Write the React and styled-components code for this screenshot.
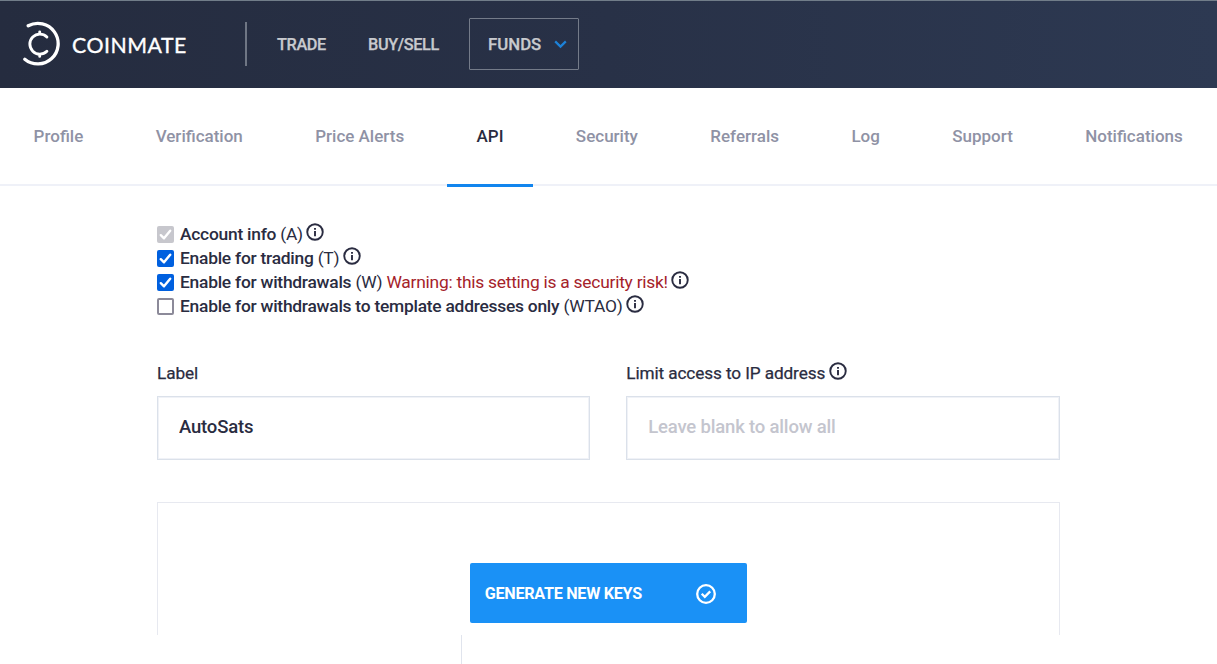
import React from 'react';
import styled, { createGlobalStyle } from 'styled-components';

const GlobalStyle = createGlobalStyle`
  *, *::before, *::after { box-sizing: border-box; }
  html, body { margin: 0; background: #fff; }
  body {
    font-family: Roboto, "Liberation Sans", sans-serif;
    color: #2a2c41;
    overflow: hidden;
  }
`;

const Page = styled.div`
  width: 1217px;
  height: 664px;
  overflow: hidden;
  background: #fff;
`;

const Header = styled.header`
  display: flex;
  align-items: center;
  height: 88px;
  padding: 0 0 1px 22px;
  border-top: 1px solid #717d89;
  background: linear-gradient(90deg, #252c3f 0%, #283147 50%, #2d3952 100%);
`;

const Brand = styled.div`
  display: flex;
  align-items: center;
  width: 223px;
  height: 46px;
  color: #fff;
`;

const BrandName = styled.span`
  margin: 2px 0 0 11px;
  font-family: Lato, sans-serif;
  font-size: 21.3px;
  line-height: 26px;
  letter-spacing: 0.5px;
  -webkit-text-stroke: 0.35px #fff;
`;

const Divider = styled.div`
  width: 2px;
  height: 44px;
  background: #6f7684;
`;

const MainNav = styled.nav`
  display: flex;
  align-items: center;
`;

const NavLink = styled.a`
  margin-left: ${(p) => p.$gap}px;
  padding-top: 2px;
  width: ${(p) => p.$width}px;
  color: #c8cace;
  font-size: 16.3px;
  font-weight: 500;
  line-height: 20px;
  letter-spacing: -0.38px;
  white-space: nowrap;
  -webkit-text-stroke: 0.25px #c8cace;
`;

const FundsButton = styled.button`
  display: flex;
  align-items: center;
  justify-content: space-between;
  width: 110px;
  height: 52px;
  margin-left: 30px;
  padding: 0 11px 0 18px;
  border: 1px solid #747b89;
  border-radius: 1px;
  background: transparent;
  color: #c8cace;
  font-family: inherit;
  font-size: 16.8px;
  font-weight: 500;
  -webkit-text-stroke: 0.25px #c8cace;
`;

const Tabs = styled.nav`
  display: flex;
  gap: 12.4px;
  height: 98px;
  padding-left: 3.6px;
  background: linear-gradient(#eff1f8, #eff1f8) 0 96px / 100% 2px no-repeat;
`;

const Tab = styled.a`
  height: 99px;
  padding: 38px 30px 0;
  border-bottom: 3px solid ${(p) => (p.$active ? '#1285ee' : 'transparent')};
  color: ${(p) => (p.$active ? '#2a2c41' : '#8f92a5')};
  font-size: 17px;
  font-weight: 500;
  line-height: 20px;
  white-space: nowrap;
`;

const Content = styled.main`
  width: 902.5px;
  margin: 36px 0 0 157px;
`;

const Option = styled.label`
  display: flex;
  align-items: center;
  height: 24.1px;
  font-size: 17.4px;
  line-height: 24px;
  letter-spacing: -0.245px;
  white-space: nowrap;
`;

const CheckBox = styled.span`
  display: flex;
  flex: none;
  width: 17px;
  height: 17px;
  margin-right: 6px;
  border-radius: 2px;
  border: ${(p) => (p.$tone === 'empty' ? '2px solid #8c8a99' : '0')};
  background: ${(p) => ({ empty: '#fff', muted: '#c7c7cd', checked: '#0060df' })[p.$tone]};
`;

const OptionName = styled.span`
  font-weight: 500;
`;

const Warning = styled.span`
  color: #a5222a;
`;

const InfoMark = styled.svg`
  flex: none;
  width: 18px;
  height: 18px;
  margin: -5px 0 0 3.5px;
`;

const Fields = styled.div`
  display: flex;
  gap: 36px;
  margin-top: 42px;
`;

const Field = styled.div`
  width: 433.25px;
`;

const FieldLabel = styled.label`
  display: flex;
  align-items: center;
  height: 26px;
  margin-bottom: 10px;
  font-size: 17.2px;
  letter-spacing: -0.1px;
  white-space: nowrap;
  -webkit-text-stroke: 0.25px #2a2c41;
`;

const TextInput = styled.input`
  display: block;
  width: 100%;
  height: 64px;
  padding: 0 21px 2px;
  border: 1px solid #dbe1ea;
  box-shadow: inset 0 0 0 1px #f0f2f7;
  border-radius: 0;
  outline: 0;
  color: #2a2c41;
  font-family: inherit;
  font-size: 18.5px;
  font-weight: 500;
  letter-spacing: -0.18px;
  &::placeholder { color: #c4c5ce; opacity: 1; }
`;

const KeysPanel = styled.section`
  display: flex;
  justify-content: center;
  height: 133px;
  margin-top: 42px;
  padding-top: 60px;
  border: 1px solid #e7e9f0;
  border-bottom: 0;
`;

const GenerateButton = styled.button`
  display: flex;
  align-items: center;
  justify-content: space-between;
  width: 277px;
  height: 60px;
  padding: 1px 30px 0 15px;
  border: 0;
  border-radius: 2px;
  background: #1a91f6;
  color: #fff;
  font-family: inherit;
  font-size: 16.2px;
  font-weight: 700;
  letter-spacing: -0.29px;
  white-space: nowrap;
`;

const LowerRule = styled.div`
  height: 30px;
  margin-left: 304px;
  border-left: 1px solid #e0e4ed;
`;

const Info = () => (
  <InfoMark viewBox="0 0 18 18" fill="none">
    <circle cx="9" cy="9" r="7.75" stroke="#2a2c41" strokeWidth="1.9" />
    <path d="M9 8v5.2M9 4.9v1.8" stroke="#2a2c41" strokeWidth="1.9" />
  </InfoMark>
);

const Check = ({ tone }) => (
  <CheckBox $tone={tone}>
    {tone !== 'empty' && (
      <svg width="17" height="17" viewBox="0 0 17 17" fill="none">
        <path d="M3.8 9.2 7 12.3l6.2-7.6" stroke="#fff" strokeWidth="2.4" strokeLinecap="round" strokeLinejoin="round" />
      </svg>
    )}
  </CheckBox>
);

const tabs = ['Profile', 'Verification', 'Price Alerts', 'API', 'Security', 'Referrals', 'Log', 'Support', 'Notifications'];

const options = [
  { name: 'Account info', code: '(A)', tone: 'muted' },
  { name: 'Enable for trading', code: '(T)', tone: 'checked' },
  { name: 'Enable for withdrawals', code: '(W)', tone: 'checked', warning: 'Warning: this setting is a security risk!' },
  { name: 'Enable for withdrawals to template addresses only', code: '(WTAO)', tone: 'empty' },
];

export default function App() {
  return (
    <Page>
      <GlobalStyle />
      <Header>
        <Brand>
          <svg width="39" height="46" viewBox="0 0 39 46" fill="none" stroke="#fff" strokeLinecap="round">
            <path d="M6.2 4.8A20.3 20.3 0 1 1 2.8 38.2" strokeWidth="3.3" />
            <path d="M24.9 16A10 10 0 1 0 24.9 30.2" strokeWidth="2.9" />
            <path d="M17.7 10.8v1.2M17.7 34.2v1.2" strokeWidth="2.8" />
          </svg>
          <BrandName>COINMATE</BrandName>
        </Brand>
        <Divider />
        <MainNav>
          <NavLink $gap={30} $width={49}>TRADE</NavLink>
          <NavLink $gap={42} $width={71}>BUY/SELL</NavLink>
          <FundsButton>
            FUNDS
            <svg width="13" height="9" viewBox="0 0 13 9" fill="none">
              <path d="M1.2 1.4 6.5 6.6l5.3-5.2" stroke="#1d82d8" strokeWidth="2.2" />
            </svg>
          </FundsButton>
        </MainNav>
      </Header>
      <Tabs>
        {tabs.map((t) => (
          <Tab key={t} $active={t === 'API'}>{t}</Tab>
        ))}
      </Tabs>
      <Content>
        {options.map((o) => (
          <Option key={o.code}>
            <Check tone={o.tone} />
            <span>
              <OptionName>{o.name}</OptionName> {o.code}
              {o.warning && <Warning> {o.warning}</Warning>}
            </span>
            <Info />
          </Option>
        ))}
        <Fields>
          <Field>
            <FieldLabel>Label</FieldLabel>
            <TextInput defaultValue="AutoSats" />
          </Field>
          <Field>
            <FieldLabel>Limit access to IP address<Info /></FieldLabel>
            <TextInput placeholder="Leave blank to allow all" />
          </Field>
        </Fields>
        <KeysPanel>
          <GenerateButton>
            GENERATE NEW KEYS
            <svg width="22" height="22" viewBox="0 0 22 22" fill="none" stroke="#fff" strokeWidth="2.3">
              <circle cx="11" cy="11" r="8.8" />
              <path d="m6.7 10.8 3.1 3.1 5.4-5.5" />
            </svg>
          </GenerateButton>
        </KeysPanel>
        <LowerRule />
      </Content>
    </Page>
  );
}
